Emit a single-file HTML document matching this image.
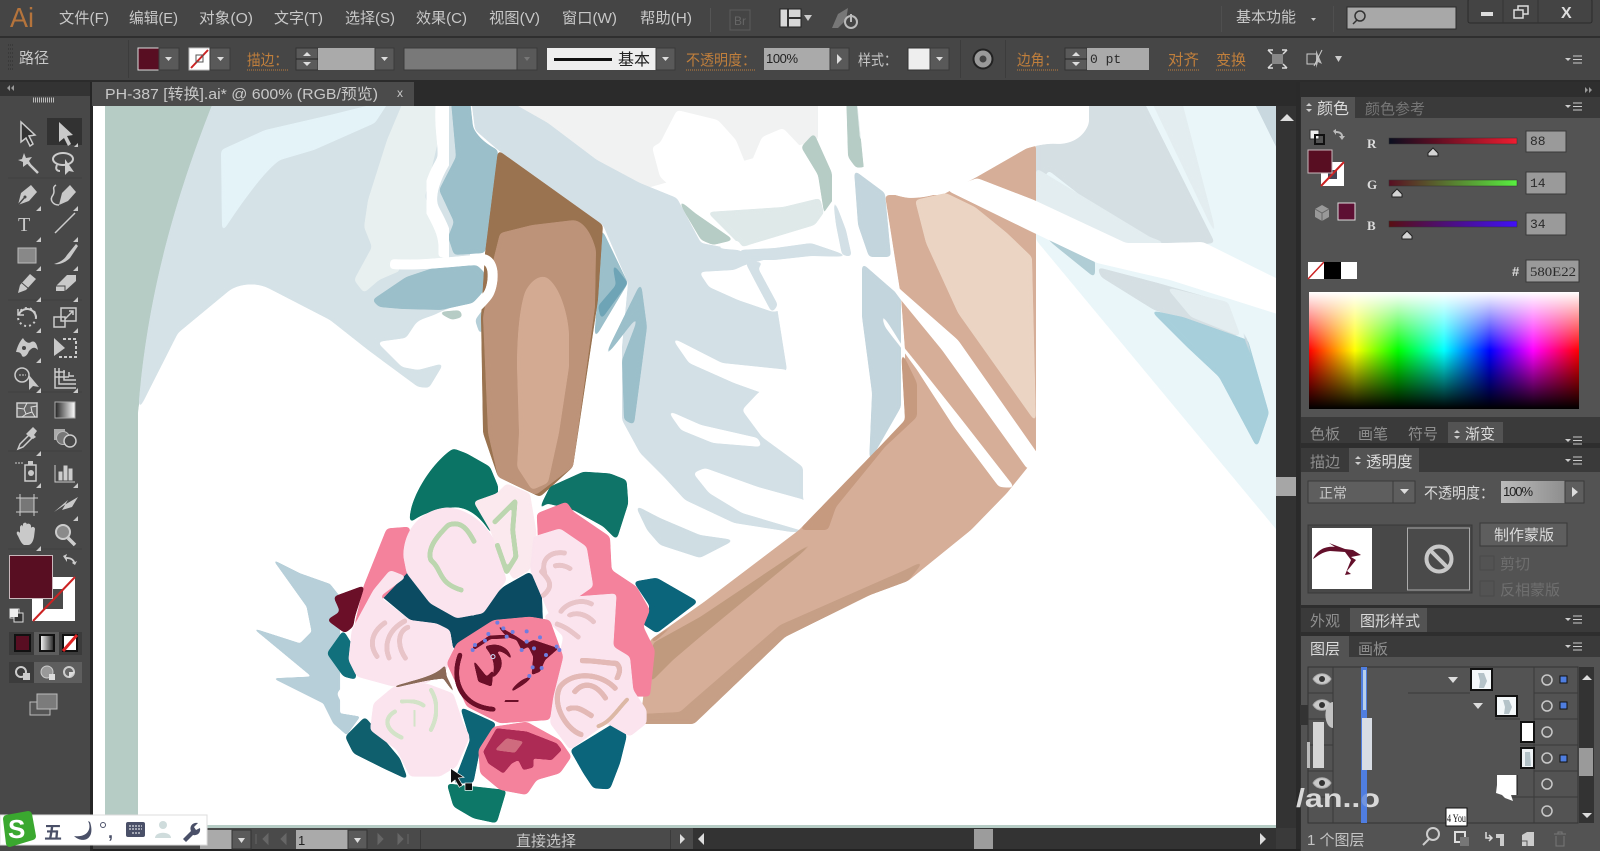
<!DOCTYPE html>
<html><head><meta charset="utf-8"><style>
html,body{margin:0;padding:0;width:1600px;height:851px;overflow:hidden;background:#3a3a3a}
svg{display:block;filter:blur(.35px)}
text{font-family:"Liberation Sans","Noto Sans CJK SC",sans-serif;fill:#c8c8c8;font-size:14px}
.o{fill:#c07f3c}.d{fill:#8f8f8f}.k{fill:#222}.h{fill:#dcdcdc}.m{font-family:"Liberation Mono","Noto Sans CJK SC",monospace;fill:#2a2a2a;font-size:13px}
.art path{filter:url(#goo)}
.bq path{filter:url(#goob)}
.bq g path{filter:url(#goos)}
</style></head><body>
<svg width="1600" height="851" viewBox="0 0 1600 851" xmlns="http://www.w3.org/2000/svg">
<defs>
<clipPath id="cv"><rect x="93" y="106" width="1183" height="722"/></clipPath>
<clipPath id="cv2"><rect x="105" y="106" width="1171" height="722"/></clipPath>
<filter id="goo" color-interpolation-filters="sRGB" x="-20%" y="-20%" width="140%" height="140%"><feGaussianBlur stdDeviation="2"/><feColorMatrix values="1 0 0 0 0 0 1 0 0 0 0 0 1 0 0 0 0 0 14 -6.500"/></filter>
<filter id="goob" color-interpolation-filters="sRGB" x="-20%" y="-20%" width="140%" height="140%"><feGaussianBlur stdDeviation="6"/><feColorMatrix values="1 0 0 0 0 0 1 0 0 0 0 0 1 0 0 0 0 0 14 -6.500"/></filter>
<filter id="goos" color-interpolation-filters="sRGB" x="-20%" y="-20%" width="140%" height="140%"><feGaussianBlur stdDeviation="3"/><feColorMatrix values="1 0 0 0 0 0 1 0 0 0 0 0 1 0 0 0 0 0 10 -4"/></filter>
<linearGradient id="hue"><stop offset="0" stop-color="#f00"/><stop offset=".17" stop-color="#ff0"/><stop offset=".33" stop-color="#0f0"/><stop offset=".5" stop-color="#0ff"/><stop offset=".67" stop-color="#00f"/><stop offset=".83" stop-color="#f0f"/><stop offset="1" stop-color="#f00"/></linearGradient>
<linearGradient id="wt" x2="0" y2="1"><stop offset="0" stop-color="#fff"/><stop offset=".5" stop-color="#fff" stop-opacity="0"/><stop offset=".5" stop-color="#000" stop-opacity="0"/><stop offset="1" stop-color="#000"/></linearGradient>
<linearGradient id="sr"><stop offset="0" stop-color="#0a0f20"/><stop offset=".35" stop-color="#5a0e22"/><stop offset="1" stop-color="#f01c30"/></linearGradient>
<linearGradient id="sg"><stop offset="0" stop-color="#580e22"/><stop offset="1" stop-color="#58f040"/></linearGradient>
<linearGradient id="sb"><stop offset="0" stop-color="#580e12"/><stop offset="1" stop-color="#4010f8"/></linearGradient>
<linearGradient id="gr"><stop offset="0" stop-color="#fff"/><stop offset="1" stop-color="#222"/></linearGradient>
<linearGradient id="f1"><stop offset="0" stop-color="#bbb"/><stop offset="1" stop-color="#8e8e8e"/></linearGradient>
</defs>
<rect width="1600" height="851" fill="#3a3a3a"/>
<!-- menu bar -->
<rect width="1600" height="36" fill="#454545"/><rect y="36" width="1600" height="2" fill="#2f2f2f"/>
<rect y="38" width="1600" height="42" fill="#464646"/><rect y="80" width="1600" height="26" fill="#2b2b2b"/>
<text x="10" y="27" style="font-size:28px;fill:#b5743c" textLength="24" lengthAdjust="spacingAndGlyphs">Ai</text>
<g style="font-size:15px">
<text x="59" y="23" style="font-size:15px" textLength="50" lengthAdjust="spacingAndGlyphs">文件(F)</text>
<text x="129" y="23" style="font-size:15px" textLength="49" lengthAdjust="spacingAndGlyphs">编辑(E)</text>
<text x="199" y="23" style="font-size:15px" textLength="54" lengthAdjust="spacingAndGlyphs">对象(O)</text>
<text x="274" y="23" style="font-size:15px" textLength="49" lengthAdjust="spacingAndGlyphs">文字(T)</text>
<text x="345" y="23" style="font-size:15px" textLength="50" lengthAdjust="spacingAndGlyphs">选择(S)</text>
<text x="416" y="23" style="font-size:15px" textLength="51" lengthAdjust="spacingAndGlyphs">效果(C)</text>
<text x="489" y="23" style="font-size:15px" textLength="51" lengthAdjust="spacingAndGlyphs">视图(V)</text>
<text x="562" y="23" style="font-size:15px" textLength="55" lengthAdjust="spacingAndGlyphs">窗口(W)</text>
<text x="640" y="23" style="font-size:15px" textLength="52" lengthAdjust="spacingAndGlyphs">帮助(H)</text>
</g>
<rect x="710" y="8" width="1" height="24" fill="#555"/>
<rect x="730" y="10" width="20" height="20" fill="none" stroke="#5c5c5c"/><text x="734" y="25" style="font-size:12px;fill:#666">Br</text>
<rect x="780" y="9" width="21" height="18" fill="#d8d8d8" stroke="#222"/><path d="M788,9v18M788,18h13" stroke="#333" stroke-width="2"/><path d="M804,15h8l-4,6z" fill="#ccc"/>
<path d="M832,28l6-14 10-6-2 12-8 8z" fill="#777"/><circle cx="851" cy="22" r="6" fill="none" stroke="#bbb" stroke-width="2"/><path d="M851,14v8" stroke="#bbb" stroke-width="2"/>
<rect x="1221" y="6" width="1" height="26" fill="#4f4f4f"/><rect x="1333" y="6" width="1" height="26" fill="#4f4f4f"/>
<text x="1236" y="22" style="font-size:15px" textLength="60" lengthAdjust="spacingAndGlyphs">基本功能</text><path d="M1311,18h5l-2.500,3z" fill="#ccc"/>
<rect x="1347" y="7" width="109" height="22" fill="#a8a8a8" stroke="#2a2a2a"/><circle cx="1360" cy="16" r="5" fill="none" stroke="#333" stroke-width="1.500"/><path d="M1357,20l-4,4" stroke="#333" stroke-width="1.500"/>
<rect x="1468" y="-1" width="124" height="24" rx="2" fill="#444" stroke="#2a2a2a"/><path d="M1503,0v23M1538,0v23" stroke="#333"/>
<rect x="1481" y="12" width="12" height="4" fill="#ddd"/><rect x="1518" y="6" width="10" height="8" fill="none" stroke="#ddd" stroke-width="1.500"/><rect x="1514" y="10" width="9" height="8" fill="#444" stroke="#ddd" stroke-width="1.500"/>
<text x="1561" y="18" style="font-size:16px;fill:#ddd;font-weight:bold">X</text>
<!-- control bar -->
<path d="M8,45h6M8,49h6M8,53h6M8,57h6M8,61h6M8,65h6M8,69h6" stroke="#2f2f2f" stroke-dasharray="1 1"/>
<text x="19" y="63" style="font-size:15px">路径</text>
<rect x="128" y="40" width="1" height="38" fill="#3c3c3c"/>
<rect x="138" y="48" width="21" height="22" fill="#580e22" stroke="#ddd"/><rect x="159" y="48" width="20" height="22" fill="#595959" stroke="#3a3a3a"/><path d="M165,57h7l-3.500,4z" fill="#ddd"/>
<rect x="189" y="48" width="21" height="22" fill="#fff" stroke="#bbb"/><path d="M191,68l17-18" stroke="#c22" stroke-width="2"/><rect x="196" y="55" width="7" height="7" fill="none" stroke="#555"/><rect x="210" y="48" width="20" height="22" fill="#595959" stroke="#3a3a3a"/><path d="M217,57h7l-3.500,4z" fill="#ddd"/>
<text x="247" y="65" class="o" textLength="41" lengthAdjust="spacingAndGlyphs" style="font-size:15px">描边：</text><path d="M247,70h41" stroke="#c07f3c" stroke-dasharray="1 1"/>
<rect x="296" y="48" width="22" height="22" fill="#5a5a5a" stroke="#333"/><path d="M296,59h22" stroke="#222"/><path d="M303,56l4-4 4,4zM303,62l4 4 4-4z" fill="#ddd"/>
<rect x="318" y="48" width="57" height="22" fill="#aaa"/><rect x="375" y="48" width="19" height="22" fill="#595959" stroke="#3a3a3a"/><path d="M381,57h7l-3.500,4z" fill="#ddd"/>
<rect x="404" y="48" width="113" height="22" fill="#797979" stroke="#3a3a3a"/><rect x="517" y="48" width="20" height="22" fill="#595959" stroke="#3a3a3a"/><path d="M524,57h6l-3,4z" fill="#777"/>
<rect x="547" y="48" width="109" height="22" fill="#eee"/><rect x="554" y="58" width="58" height="3" fill="#111"/><text x="618" y="65" class="k" style="font-size:16px">基本</text>
<rect x="656" y="48" width="19" height="22" fill="#595959" stroke="#3a3a3a"/><path d="M662,57h7l-3.500,4z" fill="#ddd"/>
<text x="686" y="65" class="o" textLength="70" lengthAdjust="spacingAndGlyphs" style="font-size:15px">不透明度：</text><path d="M686,70h70" stroke="#c07f3c" stroke-dasharray="1 1"/>
<rect x="764" y="48" width="66" height="22" fill="#aaa"/><text x="766" y="63" class="k" style="font-size:13px" textLength="32">100%</text><rect x="830" y="48" width="19" height="22" fill="#595959" stroke="#3a3a3a"/><path d="M837,54l5,5-5,5z" fill="#ddd"/>
<text x="858" y="65" textLength="39" lengthAdjust="spacingAndGlyphs" style="font-size:15px">样式：</text>
<rect x="908" y="48" width="22" height="22" fill="#eee" stroke="#333"/><rect x="930" y="48" width="19" height="22" fill="#595959" stroke="#3a3a3a"/><path d="M936,57h7l-3.500,4z" fill="#ddd"/>
<rect x="960" y="40" width="1" height="38" fill="#3c3c3c"/><rect x="1005" y="40" width="1" height="38" fill="#3c3c3c"/>
<circle cx="983" cy="59" r="9.500" fill="#9a9a9a" stroke="#222" stroke-width="2"/><circle cx="983" cy="59" r="3.500" fill="#444"/>
<text x="1017" y="65" class="o" textLength="41" lengthAdjust="spacingAndGlyphs" style="font-size:15px">边角：</text><path d="M1017,70h41" stroke="#c07f3c" stroke-dasharray="1 1"/>
<rect x="1065" y="48" width="22" height="22" fill="#5a5a5a" stroke="#333"/><path d="M1065,59h22" stroke="#222"/><path d="M1072,56l4-4 4,4zM1072,62l4 4 4-4z" fill="#ddd"/>
<rect x="1087" y="48" width="62" height="22" fill="#aaa"/><text x="1090" y="63" class="m" style="font-size:13px">0 pt</text>
<text x="1168" y="65" class="o" style="font-size:15.500px">对齐</text><path d="M1168,70h31" stroke="#c07f3c" stroke-dasharray="1 1"/>
<text x="1216" y="65" class="o" style="font-size:15px">变换</text><path d="M1216,70h30" stroke="#c07f3c" stroke-dasharray="1 1"/>
<rect x="1272" y="54" width="11" height="10" fill="#888"/><path d="M1268,50l4,4M1287,50l-4,4M1268,68l4-4M1287,68l-4-4M1268,50h5M1287,50h-5M1268,68h5M1287,68h-5" stroke="#ddd" stroke-width="1.500"/>
<rect x="1307" y="54" width="10" height="10" fill="none" stroke="#ccc"/><path d="M1316,50l6,14-4-2-2,6z" fill="#bbb"/><path d="M1322,50l-8,16" stroke="#ccc"/><path d="M1335,56h7l-3.500,6z" fill="#ccc"/>
<path d="M1565,58h6l-3,3z" fill="#ccc"/><path d="M1573,56h9M1573,59.500h9M1573,63h9" stroke="#ccc"/>

<!-- canvas art -->
<rect x="93" y="106" width="1183" height="722" fill="#fff"/>
<g clip-path="url(#cv2)"><g class="art">
<path d="M95,90H222C175,200 150,320 138,412V840H95Z" fill="#b6ccc5"/>
<!-- left sleeve -->
<path d="M218,90H470V300L440,312C430,318 418,318 414,326L406,338 377,342 402,367 418,370 444,363 429,388 418,387 368,350 330,320 268,288C255,282 240,284 230,290L178,333 138,412C145,320 165,220 218,90Z" fill="#d5e2e7"/>
<path d="M221,150L265,130 330,115 390,100 375,123 314,150 280,160C265,170 240,205 222,233Z" fill="#e4f3f8"/>
<path d="M408,90H440V133L425,197 444,243 441,260 391,263 402,270 379,280 364,293 354,280 372,247 364,227 368,200 387,140Z" fill="#e8f0f0"/>
<path d="M450,90H469L473,127C478,138 488,145 498,150L496,187 485,253 454,255 448,237 454,222 439,190 456,157Z" fill="#9bbfca"/>
<path d="M372,300L406,277 433,268 477,265 485,273 483,292 473,303 441,310 402,309 379,307Z" fill="#9bbfca"/>
<path d="M437,312L452,320 463,317 460,310Z" fill="#b6ccc5"/>
<path d="M475,320L490,300 490,320 480,335Z" fill="#b5cfd8"/>
<!-- top gray -->
<path d="M469,90H818V140L640,190 597,160 548,123Z" fill="#f1f2f2"/>
<!-- center garment -->
<path d="M470,90L475,130 498,150 603,225 628,283 622,347 622,420 640,453 664,477 685,500 734,523 791,532 811,532 803,498 803,467 762,437 742,410 758,393 787,370 777,307 771,263 738,250 701,243 677,198 640,183 597,160 548,123 490,90Z" fill="#d3e0e6"/>
<path d="M699,272L734,270 745,265 771,258 782,310 773,312 738,300 709,287Z" fill="#fff"/>
<path d="M745,262L764,262 758,268 778,305 772,313 757,285Z" fill="#d3e0e6"/>
<path d="M671,337L722,363 790,370 762,393 734,383 689,363Z" fill="#fff"/>
<path d="M667,410L701,425 758,438 762,447 713,443 681,430Z" fill="#fff"/>
<path d="M693,473L705,468 758,487 805,500 813,534 742,513 709,493Z" fill="#fff"/>
<path d="M635,505L660,518 700,535 735,540 700,558 660,545 647,530Z" fill="#cfdde3"/>
<path d="M601,227L628,283 594,340 597,303Z" fill="#9bbfca"/>
<path d="M612,262L628,283 601,320 598,306 616,285Z" fill="#6ea4b6"/>
<path d="M641,282L647,327 634,425 624,420 622,360 640,313 601,363Z" fill="#9bbfca"/>
<!-- white flap -->
<path d="M652,147L660,143 677,110 718,120 736,140 748,170 762,137 783,128 801,147 832,212 754,207 697,210 660,177Z" fill="#fff"/>
<path d="M707,212L783,207 820,198 824,213 815,225 783,237 742,247 722,227Z" fill="#dfe9e9"/>
<path d="M801,147L814,133 832,173 832,212 824,213 818,175Z" fill="#b6ccc5"/>
<path d="M846,90H856L862,143 866,167 856,168 848,157Z" fill="#b6ccc5"/>
<path d="M677,198L695,213 734,240 713,245 701,240 685,213Z" fill="#b6ccc5"/>
<path d="M713,248L738,240 742,247 815,225 840,190 855,240 845,255 811,243 775,248 738,250Z" fill="#fff"/>
<path d="M738,250L775,248 811,243 852,257 811,256 775,260 746,260Z" fill="#d3e0e6"/>
<path d="M832,193L846,230 852,257 842,255 836,225Z" fill="#d3e0e6"/>
<path d="M856,95H880L905,125 868,128 905,150 860,140Z" fill="#e4eded"/>
<!-- arm left -->
<path d="M498,150L603,225 598,300 573,467 540,497 498,477 483,433 481,317 485,253Z" fill="#9a7350"/>
<path d="M500,233L532,225 574,220C585,222 592,235 596,250L595,307 573,467 536,495 498,477 488,433 483,317 494,257Z" fill="#bd9379"/>
<path d="M546,277C538,275 530,282 525,292 519,310 517,340 517,367L519,433 517,467 532,490 548,483 559,433 569,367 569,333C568,315 560,285 546,277Z" fill="#d3aa92"/>
<path d="M443,98C440,130 447,150 444,160 432,180 428,195 431,207 440,225 448,235 445,258" fill="none" stroke="#fff" stroke-width="14"/>
<path d="M390,264C420,266 450,262 484,259 496,262 494,285 488,295 480,305 472,312 465,316" fill="none" stroke="#fff" stroke-width="10"/>
<!-- second column -->
<path d="M854,170L885,193 891,257 869,257 858,225Z" fill="#c3d5dd"/>
<path d="M862,263L901,297 901,407 869,463 872,393 862,317Z" fill="#c3d5dd"/>
<!-- right background -->
<path d="M1036,90H1290V546L1036,240Z" fill="#eaf6f9"/>
<path d="M1036,143L1089,90H1138L1215,243 1150,250 1048,170 1036,200Z" fill="#d5dfe3"/>
<path d="M1036,168L1150,237 1166,243 1140,250 1097,263 1034,232Z" fill="#e3edf0"/>
<path d="M1146,90H1179L1219,243Z" fill="#e3edf0"/>
<path d="M1248,90H1290V175Z" fill="#c9d8df"/>
<path d="M1038,232L1095,260 1095,278Z" fill="#b0cdd5"/>
<path d="M1097,267L1158,283 1228,303 1240,337 1154,310 1101,277Z" fill="#d5dfe3"/>
<path d="M1166,287L1228,302 1241,337 1191,317Z" fill="#e3edf0"/>
<path d="M1150,310L1183,317 1248,340 1269,413 1257,448 1219,377 1187,347Z" fill="#a7cfdb"/>
<path d="M1232,303L1269,413 1248,340Z" fill="#c9d8df"/>
<!-- right arm -->
<path d="M885,195H942L975,178 1036,143V457L1007,493 971,530 908,581 870,595 785,637 740,680 694,724H640L650,640 704,602 799,530 860,467 905,423 905,350 901,297Z" fill="#d6ae98"/>
<path d="M915,200L946,193 975,207 1007,233 1032,257 1036,423 958,313 926,243Z" fill="#ebd4c3"/>
<path d="M901,350L917,383 917,417 885,447 836,507 828,530 799,530 704,602 653,643 650,640 704,602 799,530 860,467 905,420Z" fill="#c69a7f"/>
<path d="M653,643L700,617 830,530 700,637 673,660 650,683Z" fill="#c09a7e"/>
<path d="M640,714L680,712 690,703 780,625 905,570 925,560 908,581 870,595 785,637 740,680 694,724H640Z" fill="#c69f86"/>
<path d="M869,257L901,290 958,340 1040,457 1028,470 942,350 901,300Z" fill="#fff"/>
<path d="M862,265L873,300 901,343 962,420 1015,488 999,487 954,427 917,370 885,327Z" fill="#fff"/>
<path d="M856,90H1089V123C1085,135 1075,143 1060,144 1040,142 1010,150 975,177 950,192 930,198 909,198 890,196 870,185 864,170Z" fill="#fff"/>
<path d="M977,178L1034,200 1126,243 1166,243 1203,242 1290,285V318L1170,280 1097,263 1032,232 946,190Z" fill="#fff"/>
</g>
<rect x="93" y="825" width="1183" height="3" fill="#b6ccc5"/>
</g>

<!-- bouquet -->
<g transform="translate(240,430) scale(.33333)">
<g class="bq">
<g><path d="M100,390L180,430 270,462 300,500 300,850 360,860 320,915 280,880 250,820 100,745 215,740 40,595 180,640 215,605 200,530Z" fill="#b7cfd9"/></g>
<path d="M510,280C500,220 570,100 640,55L680,70 750,110 775,170 770,230 755,315C730,270 690,230 640,232 570,240 530,260 510,280Z" fill="#0b7465"/>
<path d="M890,250L930,170 1030,125 1110,130 1160,150 1165,220 1130,330 1090,290 1000,240 920,220Z" fill="#0f7468"/>
<path d="M1180,455L1250,443 1375,515 1250,610 1205,580 1230,530Z" fill="#0b657b"/>
<path d="M990,960L1120,880 1145,865 1160,920 1140,1000 1110,1078 1060,1075 1030,1030Z" fill="#0b657b"/>
<path d="M375,860L480,985 505,1050 430,1015 340,970 315,920Z" fill="#0f5f6d"/>
<path d="M310,600L335,640 350,750 310,740 260,670Z" fill="#11707c"/>
<path d="M620,1060L800,1080 770,1180 700,1165 640,1130Z" fill="#0d7868"/>
<path d="M420,495L495,420 560,500 700,560 790,470 870,425 905,480 910,600 640,660 630,600 510,570Z" fill="#0b4b62"/>
<path d="M660,830L770,880 720,960 700,1060 640,1060 690,930Z" fill="#0d6576"/>
<path d="M440,295L510,290 510,420 340,600 370,470Z" fill="#f4829c"/>
<path d="M890,250L980,215 1000,245 1110,320 1115,420 1190,470 1230,540 1210,590 1245,660 1230,800 1100,800 900,450Z" fill="#f4829c"/>
<path d="M280,500L375,465 345,560 340,590 315,610 260,570 300,545Z" fill="#6b0f28"/>
<path d="M490,380C490,300 540,240 620,232 700,235 770,310 780,380L800,450 730,550 650,565 570,520 500,430Z" fill="#fbe4ee"/>
<path d="M700,215L770,190 800,160 870,190 890,310 870,420 820,450 780,380 750,300Z" fill="#fbe9ee"/>
<path d="M400,480L450,420 500,440 420,500 510,570 590,580 630,600 640,660 620,720 560,760 460,770 350,740 325,690 335,600Z" fill="#fbe4ee"/>
<path d="M880,320L960,295 1040,350 1060,470 930,560 870,420Z" fill="#fbe4ee"/>
<path d="M910,560L1000,500 1130,490 1120,650 1170,680 1180,780 1220,840 1220,880 1170,920 1100,880 990,960 930,880 940,750 970,620Z" fill="#fbe4ee"/>
<path d="M400,820L460,770 560,760 640,790 670,880 690,920 650,1010 600,1040 510,1040 470,960 390,900Z" fill="#fbe4ee"/>
<path d="M290,790L320,755 400,770 410,800 370,850 310,830Z" fill="#fff"/>
<g fill="none" stroke="#bcd6af" stroke-width="14" stroke-linejoin="round">
<path d="M705,340C685,300 665,270 625,285 600,310 560,350 572,390 610,420 590,460 670,482"/>
<path d="M760,280L825,215 818,300 828,380 800,425 770,340"/>
</g>
<g fill="none" stroke="#d3e3c8" stroke-width="12"><path d="M470,842C430,860 430,900 490,925"/><path d="M480,815C510,810 540,815 555,830"/><path d="M570,775C600,820 590,870 570,905"/><path d="M522,840L525,890"/></g>
<g fill="none" stroke="#e8c4c8" stroke-width="14" stroke-linejoin="round">
<path d="M415,685C380,640 400,600 440,575M450,690C430,650 440,600 500,570M500,690C470,650 470,600 510,590"/>
<path d="M980,370C930,360 900,390 915,430M940,410C960,400 985,410 995,420M900,420C930,450 945,470 905,500"/>
<path d="M1060,525C1020,500 970,525 960,550M1065,580C1030,540 990,550 985,560M945,580C980,590 1000,610 1020,625"/>
</g>
<g fill="none" stroke="#e3b9b6" stroke-width="15" stroke-linejoin="round">
<path d="M1130,780C1090,730 1000,720 960,770 930,830 990,910 1030,915"/>
<path d="M1000,790C1030,750 1070,760 1100,810"/>
<path d="M1020,692C1060,690 1100,700 1130,700 1150,720 1130,740 1130,750"/>
<path d="M980,840C1010,820 1040,850 1060,860"/>
<path d="M1070,890C1110,880 1130,840 1165,805" stroke="#dcb8a5" stroke-width="11"/>
</g>
<g><path d="M460,770C520,750 590,740 615,705L620,740 650,800 610,745C560,750 520,760 470,772Z" fill="#8a6a58"/></g>
<path d="M620,700L650,640 760,570 870,560 930,570 970,680 940,800 930,870 780,880 680,830Z" fill="#f4829c"/>
<path d="M715,960L760,890 860,875 960,930 995,980 960,1030 890,1050 860,1095 780,1080 720,1030Z" fill="#f4829c"/>
<g>
<path d="M730,965L770,895 860,905 950,940 965,960 935,990 880,985 880,1012 850,1020 835,990 815,1000 790,1030 745,1000Z" fill="#ad2b55"/>
<path d="M765,960L800,925 850,935 825,968Z" fill="#cf6b7e"/>
<path d="M660,675C630,760 670,830 760,838" fill="none" stroke="#6b0f28" stroke-width="14" stroke-linecap="round"/>
<path d="M800,815L830,812" fill="none" stroke="#6b0f28" stroke-width="13" stroke-linecap="round"/>
<path d="M700,690L740,740 760,720 755,770 715,755Z" fill="#6b0f28"/>
<path d="M735,650C770,635 810,650 815,690 800,670 780,660 770,665 800,700 780,730 755,745 770,710 760,680 735,650Z" fill="#6b0f28"/>
<path d="M815,780C835,755 850,745 875,740 860,760 840,770 815,785Z" fill="#6b0f28"/>
<path d="M770,585L830,620 860,640 880,630 955,655 915,690 900,725 875,735 880,680 865,650 845,660 830,630 800,620Z" fill="#6b0f28"/>
<path d="M700,655L750,622 800,620" fill="none" stroke="#6b0f28" stroke-width="10"/>
</g>
</g>
<g fill="#6f7de0">
<circle cx="772" cy="578" r="6"/><circle cx="790" cy="595" r="6"/><circle cx="818" cy="606" r="6"/><circle cx="860" cy="604" r="6"/><circle cx="900" cy="622" r="6"/><circle cx="950" cy="650" r="6"/><circle cx="958" cy="660" r="6"/><circle cx="918" cy="675" r="6"/><circle cx="905" cy="714" r="6"/><circle cx="878" cy="712" r="6"/><circle cx="868" cy="738" r="6"/><circle cx="882" cy="655" r="6"/><circle cx="845" cy="660" r="6"/><circle cx="860" cy="635" r="6"/><circle cx="800" cy="620" r="6"/><circle cx="745" cy="612" r="6"/><circle cx="735" cy="632" r="6"/><circle cx="705" cy="645" r="6"/><circle cx="698" cy="660" r="6"/>
</g>
<circle cx="759" cy="680" r="6" fill="none" stroke="#cfe0ff" stroke-width="3"/>
<path d="M632,1015V1060L645,1050 658,1072 668,1066 655,1044 672,1042Z" fill="#111" stroke="#fff" stroke-width="2"/>
<rect x="675" y="1059" width="22" height="22" fill="#111" stroke="#fff" stroke-width="2"/>
</g>

<!-- left tool panel -->
<rect x="0" y="82" width="90" height="769" fill="#484848"/><rect x="90" y="82" width="3" height="769" fill="#262626"/>
<rect x="0" y="82" width="90" height="14" fill="#333"/><path d="M10,85l-3,3 3,3zM14,85l-3,3 3,3z" fill="#999"/>
<path d="M33,100h22" stroke="#bbb" stroke-width="5" stroke-dasharray="1 1"/>
<path d="M8,178H82M8,300H82M8,392H82M8,451H82M8,549H82" stroke="#3f3f3f"/>
<rect x="47" y="118" width="35" height="27" fill="#323232"/>
<g fill="#c9c9c9" stroke="none">
<path d="M21,122V142L26,138 30,146 33,144 29,136 35,135Z" fill="#333" stroke="#ccc" stroke-width="1.500"/>
<path d="M59,122V142L64,138 68,146 71,144 67,136 73,135Z"/>
<g transform="translate(27,162)"><path d="M-5,-3l2-6 2,5 6-1-3 4 3 5-5-2-4 3 0-5-5-2z"/><path d="M2,2L11,11" stroke="#ccc" stroke-width="2.500"/></g>
<g transform="translate(65,162)" fill="none" stroke="#ccc" stroke-width="2"><ellipse cx="-2" cy="-3" rx="10" ry="6"/><path d="M-8,3c-2,4 0,6 3,6"/><path d="M0,-3V13L4,9 9,10Z" fill="#ccc" stroke="none"/></g>
<g transform="translate(27,195)"><path d="M-9,10L-6,-2 4,-10 10,-3 2,6Z"/><path d="M-9,10L-2,2" stroke="#484848" stroke-width="1.500"/><circle cx="-2" cy="2" r="1.500" fill="#484848"/></g>
<g transform="translate(67,195)"><path d="M-8,10L-5,-2 3,-10 9,-3 1,6Z"/><path d="M-8,10C-14,10 -18,5 -14,0 -11,-5 -16,-7 -11,-10" fill="none" stroke="#ccc" stroke-width="1.500"/></g>
<text x="18" y="231" style="font-size:20px;font-family:'Liberation Serif',serif;fill:#c9c9c9">T</text>
<path d="M55,233L75,213" stroke="#ccc" stroke-width="1.500"/>
<rect x="18" y="248" width="18" height="15" fill="#888" stroke="#bbb"/>
<path d="M54,264C60,262 64,260 67,255L76,244 78,246 70,258C66,262 60,265 54,264Z"/>
<g transform="translate(27,283)"><path d="M-9,10L-7,2 3,-9 9,-4 -1,7Z"/><path d="M-5,0l7,6" stroke="#484848"/></g>
<g transform="translate(65,283)"><path d="M-9,3L2,-8H11L11,-2 0,8H-9Z"/><path d="M-9,3H0V8" stroke="#484848" fill="none"/></g>
<g transform="translate(27,317)" fill="none" stroke="#ccc" stroke-width="2"><path d="M-8,-3a9,9 0 0 1 17,3" /><circle cx="0" cy="0" r="9" stroke-dasharray="2 3"/><path d="M-9,-8v6h6" stroke-width="1.500"/></g>
<g transform="translate(65,317)" fill="none" stroke="#ccc" stroke-width="1.500"><rect x="-11" y="0" width="11" height="10"/><rect x="-4" y="-9" width="15" height="13"/><path d="M0,2L8,-6M4,-6h4v4"/></g>
<g transform="translate(27,348)"><path d="M-11,4C-9,-4 -6,-8 -4,-10 -2,-6 2,-4 4,-6 8,-8 10,-4 11,2 7,-2 5,0 2,3 0,8 -3,10 -5,8 -6,4 -9,4 -11,4Z"/><circle cx="-3" cy="0" r="2" fill="#484848"/></g>
<g transform="translate(65,348)"><path d="M-11,-10L0,0-11,8Z"/><path d="M-2,-9H11V9H-8" fill="none" stroke="#ccc" stroke-width="2" stroke-dasharray="3 2"/></g>
<g transform="translate(27,378)"><circle cx="-5" cy="-3" r="7" fill="none" stroke="#ccc" stroke-width="1.500"/><path d="M2,-3V12L6,8 12,9Z"/><path d="M-8,-3h7" stroke="#ccc" stroke-dasharray="2 1"/></g>
<g transform="translate(65,378)" fill="none" stroke="#ccc" stroke-width="1.500"><path d="M-10,-10V10H11M-6,-10V6H11M-1,-8V2H11M4,-6V-2H9"/><path d="M-10,-6H0M-10,-1H4"/></g>
<g transform="translate(27,410)"><rect x="-10" y="-7" width="20" height="14" fill="#666" stroke="#ccc" stroke-width="1.500"/><path d="M-10,-2L-3,-1 0,-7M-3,-1L-1,4-5,7M-1,4L5,2 8,7M5,2L4,-3 10,-4" fill="none" stroke="#ddd"/></g>
<rect x="55" y="402" width="20" height="16" fill="url(#gr)" stroke="#aaa" transform="translate(130,0) scale(-1,1)"/>
<g transform="translate(27,438)"><path d="M-9,11L-7,6 2,-3 5,0-4,9Z" fill="none" stroke="#ccc" stroke-width="1.500"/><path d="M0,-5L4,-9 6,-11 10,-7 7,-3 9,-1 6,1-1,-4Z"/></g>
<g transform="translate(65,438)"><rect x="-11" y="-9" width="11" height="11" fill="#aaa"/><circle cx="-2" cy="0" r="6.500" fill="#777" stroke="#bbb"/><circle cx="5" cy="3" r="6" fill="#484848" stroke="#ccc" stroke-width="1.500"/></g>
<g transform="translate(31,473)"><rect x="-6" y="-8" width="11" height="16" fill="none" stroke="#ccc" stroke-width="1.500"/><circle cx="0" cy="0" r="3"/><rect x="-3" y="-12" width="5" height="4"/><path d="M-16,-10h8" stroke="#ccc" stroke-dasharray="2 1"/></g>
<g transform="translate(65,473)" fill="none" stroke="#ccc"><path d="M-10,-8V9H10"/><rect x="-6" y="-1" width="3" height="8" fill="#ccc"/><rect x="-1" y="-7" width="3" height="14" fill="#ccc"/><rect x="4" y="-4" width="3" height="11" fill="#ccc"/></g>
<g transform="translate(27,505)"><rect x="-7" y="-7" width="14" height="14" fill="#777" stroke="#ccc"/><path d="M-11,-7H11M-11,7H11M-7,-11V11M7,-11V11" stroke="#ccc" stroke-dasharray="4 10 4 0"/></g>
<path d="M54,512L66,504 78,497 72,507 62,510 68,500Z"/>
<g transform="translate(27,535)"><path d="M-9,1C-12,-3 -9,-5 -7,-2V-8C-6,-11 -4,-10 -4,-8V-11C-3,-13 0,-13 0,-10V-11C1,-12 4,-11 4,-9V-7C5,-9 8,-8 8,-6L7,2C6,7 4,10 1,10H-3C-6,8 -7,5 -9,1Z"/></g>
<g transform="translate(65,535)"><circle cx="-2" cy="-3" r="7" fill="#8a8a8a" stroke="#ccc" stroke-width="2"/><path d="M3,3L10,10" stroke="#ccc" stroke-width="3.500"/></g>
<path d="M41,206l-5,5h5zM78,143l-4,4h4zM78,206l-5,5h5zM41,237l-5,5h5zM78,237l-5,5h5zM41,266l-5,5h5zM78,266l-5,5h5zM41,297l-5,5h5zM78,297l-5,5h5zM41,328l-5,5h5zM78,328l-5,5h5zM41,358l-5,5h5zM41,388l-5,5h5zM78,388l-5,5h5zM41,451l-5,5h5zM41,483l-5,5h5zM78,483l-5,5h5zM78,516l-5,5h5zM41,546l-5,5h5z"/>
</g>
<rect x="32" y="577" width="43" height="44" fill="#fff"/><rect x="43" y="589" width="20" height="20" fill="#4a4a4a"/><path d="M33,621L75,577" stroke="#c22" stroke-width="2"/>
<rect x="9.500" y="555.500" width="43" height="43" fill="#580e22" stroke="#c9b8bc"/>
<path d="M63,556l4,-2-1,3c5,0 8,2 9,5l2,-1-2,4-3,-2 1,-1c-1,-2-3,-3-6,-3l0,3z" fill="#ccc"/>
<rect x="10" y="609" width="9" height="9" fill="#333" stroke="#ddd"/><rect x="14" y="613" width="9" height="9" fill="#333" stroke="#ddd"/><rect x="10" y="609" width="8" height="8" fill="#eee"/>
<rect x="9" y="632" width="73" height="23" fill="#3b3b3b"/><rect x="34" y="632" width="25" height="23" fill="#5d5d5d"/>
<rect x="15" y="635" width="15" height="16" fill="#580e22" stroke="#111" stroke-width="2"/><rect x="40" y="635" width="14" height="16" fill="url(#gr)" stroke="#111" stroke-width="2"/><rect x="63" y="635" width="14" height="16" fill="#fff" stroke="#111" stroke-width="2"/><path d="M63,651L77,635" stroke="#d22" stroke-width="3"/>
<rect x="9" y="662" width="73" height="21" fill="#5e5e5e"/><rect x="9" y="662" width="25" height="21" fill="#3c3c3c"/>
<circle cx="21" cy="672" r="5" fill="none" stroke="#ccc" stroke-width="2"/><rect x="23" y="673" width="7" height="7" fill="#ccc"/>
<circle cx="47" cy="672" r="6" fill="#999" stroke="#ccc"/><rect x="49" y="674" width="6" height="6" fill="#ddd"/><circle cx="69" cy="672" r="5" fill="#666" stroke="#ccc" stroke-width="2"/><path d="M69,672l6,0-6,6z" fill="#ddd"/>
<rect x="30" y="702" width="20" height="13" fill="#555" stroke="#bbb"/><rect x="37" y="694" width="20" height="15" fill="#7b7b7b" stroke="#bbb"/>

<!-- tab -->
<rect x="92" y="82" width="322" height="24" fill="#4b4b4b"/>
<text x="105" y="99" textLength="273" lengthAdjust="spacingAndGlyphs" style="font-size:15px">PH-387 [转换].ai* @ 600% (RGB/预览)</text>
<text x="397" y="97" style="font-size:12px">x</text>

<!-- vertical scrollbar -->
<rect x="1276" y="106" width="24" height="722" fill="#333"/><rect x="1296" y="82" width="4" height="769" fill="#2a2a2a"/>
<path d="M1280,121l7-7 7,7z" fill="#ddd"/>
<rect x="1276" y="477" width="20" height="19" fill="#a6a6a6"/>

<!-- bottom status bar -->
<rect x="93" y="828" width="1183" height="23" fill="#4a4a4a"/><rect x="93" y="849" width="1207" height="2" fill="#222"/>
<rect x="200" y="830" width="32" height="19" fill="#aaa"/><rect x="232" y="830" width="19" height="19" fill="#5a5a5a" stroke="#333"/><path d="M238,838h7l-3.500,5z" fill="#ddd"/>
<path d="M256,834v10M268,834l-5,5 5,5zM286,834l-5,5 5,5z" fill="#666" stroke="#666"/>
<rect x="296" y="830" width="52" height="19" fill="#aaa"/><text x="298" y="845" class="k" style="font-size:13px">1</text><rect x="348" y="830" width="19" height="19" fill="#5a5a5a" stroke="#333"/><path d="M354,838h7l-3.500,5z" fill="#ddd"/>
<path d="M378,834l5,5-5,5zM398,834l5,5-5,5zM408,834v10" fill="#666" stroke="#666"/>
<rect x="420" y="830" width="1" height="19" fill="#3a3a3a"/>
<text x="516" y="846" style="font-size:15px">直接选择</text>
<rect x="670" y="830" width="1" height="19" fill="#3a3a3a"/><path d="M680,834l5,5-5,5z" fill="#ddd"/>
<rect x="693" y="828" width="583" height="21" fill="#333"/><path d="M704,833l-6,6 6,6z" fill="#ddd"/><path d="M1260,833l6,6-6,6z" fill="#ddd"/><rect x="974" y="829" width="19" height="20" fill="#9c9c9c"/>

<!-- IME bar -->
<rect x="0" y="815" width="207" height="30" fill="#fff" stroke="#ddd"/>
<path d="M3,819Q3,816 6,815L28,811Q31,811 32,814L36,836Q36,839 33,840L10,847Q7,847 6,844Z" fill="#3aa82f"/>
<text x="8" y="838" style="font-size:26px;font-weight:bold;fill:#fff">S</text>
<text x="44" y="839" style="font-size:18px;font-weight:bold;fill:#4a5068">五</text>
<path d="M88,821C92,828 88,838 74,836 82,844 96,840 90,822Z" fill="#4a5068"/>
<circle cx="103" cy="825" r="2.500" fill="none" stroke="#4a5068"/><text x="108" y="838" style="font-size:18px;font-weight:bold;fill:#4a5068">,</text>
<rect x="126" y="822" width="19" height="15" rx="2" fill="#4a5068"/><path d="M129,826h13M129,829h13M132,833h8" stroke="#fff" stroke-dasharray="2 1"/>
<circle cx="163" cy="825" r="4" fill="#cfdcdc"/><path d="M155,838c0-7 16-7 16,0z" fill="#cfdcdc"/>
<path d="M183,839l8-8c-2-5 2-9 7-8l-4,4 2,3 4-2c1,5-3,8-7,7l-7,7z" fill="#4a5068"/>

<!-- right panels -->
<rect x="1300" y="82" width="300" height="769" fill="#2e2e2e"/>
<path d="M1585,87l3,3-3,3zM1589,87l3,3-3,3z" fill="#999"/>
<!-- colour -->
<rect x="1301" y="97" width="299" height="21" fill="#3a3a3a"/><rect x="1301" y="97" width="54" height="21" fill="#535353"/>
<path d="M1306,106l3-3 3,3zM1306,109l3,3 3-3z" fill="#ccc"/>
<text x="1317" y="114" class="h" style="font-size:16px">颜色</text><text x="1365" y="114" class="d" style="font-size:15px;fill:#777">颜色参考</text>
<rect x="1301" y="118" width="299" height="299" fill="#535353"/>
<rect x="1310" y="130" width="9" height="9" fill="#eee" stroke="#333"/><rect x="1315" y="135" width="9" height="9" fill="none" stroke="#111" stroke-width="2"/>
<path d="M1333,131l3-2v2c4,0 7,2 7,5l2,0-3,4-3-4 2,0c0-2-2-3-5-3v2z" fill="#bbb"/>
<rect x="1321" y="162" width="23" height="24" fill="#fff"/><rect x="1328" y="170" width="9" height="9" fill="#445"/><path d="M1321,186L1344,162" stroke="#c22" stroke-width="2"/>
<rect x="1308" y="150" width="24" height="23" fill="#580e22" stroke="#c9b8bc"/>
<path d="M1322,205l7,4v8l-7,4-7-4v-8z" fill="#999"/><path d="M1315,209l7,4 7-4M1322,213v8" stroke="#666" fill="none"/>
<rect x="1338" y="203" width="17" height="17" fill="#5d0f33" stroke="#ddd"/>
<text x="1367" y="148" class="h" style="font-size:13px;font-family:'Liberation Serif',serif;font-weight:bold">R</text>
<text x="1367" y="189" class="h" style="font-size:13px;font-family:'Liberation Serif',serif;font-weight:bold">G</text>
<text x="1367" y="230" class="h" style="font-size:13px;font-family:'Liberation Serif',serif;font-weight:bold">B</text>
<rect x="1389" y="138" width="128" height="6" fill="url(#sr)" stroke="#333" stroke-width=".5"/>
<rect x="1389" y="180" width="128" height="6" fill="url(#sg)" stroke="#333" stroke-width=".5"/>
<rect x="1389" y="221" width="128" height="6" fill="url(#sb)" stroke="#333" stroke-width=".5"/>
<path d="M1428,153l5-5 5,5v3h-10zM1392,194l5-5 5,5v3h-10zM1402,236l5-5 5,5v3h-10z" fill="#d4d4d4" stroke="#222"/>
<g fill="#9a9a9a" stroke="#3a3a3a"><rect x="1526" y="131" width="40" height="21"/><rect x="1526" y="172" width="40" height="22"/><rect x="1526" y="213" width="40" height="22"/><rect x="1526" y="260" width="53" height="22"/></g>
<text x="1530" y="145" class="m" style="font-size:13px">88</text><text x="1530" y="187" class="m" style="font-size:13px">14</text><text x="1530" y="228" class="m" style="font-size:13px">34</text>
<text x="1530" y="276" class="m" style="font-size:13px;font-family:'Liberation Serif',serif" textLength="46" lengthAdjust="spacingAndGlyphs">580E22</text>
<text x="1512" y="276" class="h" style="font-size:13px;font-weight:bold">#</text>
<rect x="1308" y="262" width="16" height="17" fill="#fff"/><path d="M1308,279L1324,262" stroke="#c22" stroke-width="1.500"/><rect x="1324" y="262" width="17" height="17" fill="#000"/><rect x="1341" y="262" width="16" height="17" fill="#fff"/>
<rect x="1309" y="292" width="270" height="117" fill="url(#hue)"/><rect x="1309" y="292" width="270" height="117" fill="url(#wt)"/>
<!-- gradient tabs -->
<rect x="1301" y="417" width="299" height="26" fill="#3a3a3a"/>
<rect x="1448" y="422" width="55" height="21" fill="#535353"/>
<text x="1310" y="439" class="d" style="font-size:15px">色板</text><text x="1358" y="439" class="d" style="font-size:15px">画笔</text><text x="1408" y="439" class="d" style="font-size:15px">符号</text>
<path d="M1454,433l3-3 3,3zM1454,436l3,3 3-3z" fill="#ccc"/><text x="1465" y="439" class="h" style="font-size:15px">渐变</text>
<!-- transparency -->
<rect x="1301" y="448" width="299" height="24" fill="#3a3a3a"/><rect x="1349" y="448" width="70" height="24" fill="#535353"/>
<text x="1310" y="467" class="d" style="font-size:15px">描边</text>
<path d="M1355,459l3-3 3,3zM1355,462l3,3 3-3z" fill="#ccc"/><text x="1366" y="467" class="h" style="font-size:15.500px">透明度</text>
<rect x="1301" y="472" width="299" height="133" fill="#535353"/>
<rect x="1308" y="481" width="107" height="22" fill="#5e5e5e" stroke="#3a3a3a"/><path d="M1393,481v22" stroke="#3a3a3a"/><path d="M1400,489h9l-4.500,5z" fill="#ddd"/>
<text x="1319" y="498" style="font-size:14px">正常</text>
<text x="1424" y="498" class="h" textLength="70" lengthAdjust="spacingAndGlyphs" style="font-size:15px">不透明度：</text>
<rect x="1501" y="481" width="64" height="22" fill="url(#f1)"/><text x="1503" y="496" class="k" style="font-size:13px" textLength="30">100%</text><rect x="1565" y="481" width="19" height="22" fill="#5e5e5e" stroke="#3a3a3a"/><path d="M1572,487l6,5-6,5z" fill="#ddd"/>
<rect x="1308" y="525" width="164" height="68" fill="#484848" stroke="#383838"/><rect x="1312" y="528" width="60" height="61" fill="#fff"/>
<path d="M1313,559C1318,548 1328,546 1335,547L1329,543 1345,549 1353,550 1361,555 1351,557 1356,560 1347,571 1351,574 1345,575 1351,560 1345,552 1330,551C1322,552 1318,556 1313,559Z" fill="#63102b"/>
<rect x="1407.500" y="528" width="62" height="62" fill="#4a4a4a" stroke="#aaa"/>
<circle cx="1439" cy="559" r="12.500" fill="none" stroke="#c8c8c8" stroke-width="4"/><path d="M1430,550L1448,568" stroke="#c8c8c8" stroke-width="4"/>
<rect x="1480" y="523" width="87" height="23" fill="#5e5e5e" stroke="#383838"/><text x="1494" y="540" class="h" style="font-size:15px">制作蒙版</text>
<rect x="1480" y="556" width="14" height="14" fill="none" stroke="#4a4a4a"/><rect x="1480" y="581" width="14" height="15" fill="none" stroke="#4a4a4a"/>
<text x="1500" y="569" style="font-size:15px;fill:#6f6f6f">剪切</text><text x="1500" y="595" style="font-size:15px;fill:#6f6f6f">反相蒙版</text>
<!-- appearance -->
<rect x="1301" y="608" width="299" height="24" fill="#3a3a3a"/><rect x="1350" y="608" width="77" height="24" fill="#535353"/>
<text x="1310" y="626" class="d" style="font-size:15px">外观</text><text x="1360" y="626" class="h" style="font-size:15px">图形样式</text>
<!-- layers -->
<rect x="1301" y="636" width="299" height="21" fill="#3a3a3a"/><rect x="1301" y="636" width="48" height="21" fill="#535353"/>
<text x="1310" y="654" class="h" style="font-size:15px">图层</text><text x="1358" y="654" class="d" style="font-size:15px">画板</text>
<rect x="1301" y="657" width="299" height="194" fill="#535353"/>
<rect x="1308" y="667" width="270" height="156" fill="#535353" stroke="#333"/>
<rect x="1579" y="667" width="15" height="156" fill="#333"/><path d="M1582,680l5-5 5,5zM1582,813l5,5 5-5z" fill="#ddd"/><rect x="1579" y="748" width="14" height="28" fill="#9a9a9a"/>
<path d="M1333,667V823M1534,667V823M1308,745H1333M1308,693H1333M1308,719H1333M1308,771H1333M1308,797H1333M1534,693H1578M1534,719H1578M1534,745H1578M1534,771H1578M1534,797H1578M1408,693H1470M1495,719H1520M1520,745H1534M1510,797H1534" stroke="#3a3a3a"/>
<rect x="1361" y="667" width="6" height="156" fill="#4f7ee0"/>
<rect x="1362" y="718" width="10" height="52" fill="#d8dde4"/><rect x="1363" y="670" width="3" height="40" fill="#b8d0ec"/>
<path d="M1313,679c4-7 14-7 18,0c-4,7-14,7-18,0z" fill="#c9c9c9" stroke="#aaa"/><path d="M1313,705c4-7 14-7 18,0c-4,7-14,7-18,0z" fill="#c9c9c9" stroke="#aaa"/><path d="M1313,783c4-7 14-7 18,0c-4,7-14,7-18,0z" fill="#c9c9c9" stroke="#aaa"/>
<circle cx="1322" cy="679" r="3" fill="#333"/><circle cx="1322" cy="705" r="3" fill="#333"/><circle cx="1322" cy="783" r="3" fill="#333"/>
<rect x="1313" y="722" width="11" height="46" fill="#d5d5d5"/><rect x="1307" y="742" width="3" height="26" fill="#bbb"/><path d="M1333,702a7,12 0 0 0 0,26z" fill="#c2c2c2"/>
<rect x="1300" y="705" width="8" height="20" fill="#333"/>
<path d="M1448,677h10l-5,6z" fill="#ddd"/><path d="M1473,703h10l-5,6z" fill="#ddd"/>
<g stroke="#111" stroke-width="2"><rect x="1471" y="669" width="21" height="21" fill="#f4f8fa"/><rect x="1496" y="696" width="21" height="20" fill="#f4f8fa"/><rect x="1521" y="722" width="13" height="20" fill="#fff"/><rect x="1521" y="748" width="13" height="20" fill="#eef2f5"/></g>
<path d="M1478,673l6,0 3,8-3,7h-5l1-7zM1503,700h6l3,7-3,7h-5l1-7zM1525,752h5l1,14h-6z" fill="#8aa0a8" opacity=".6"/>
<path d="M1497,775h20v20h-6l2,6-8-3-3-3-6-2 1-8z" fill="#fff"/><path d="M1517,775v20" stroke="#111"/>
<rect x="1446" y="808" width="21" height="18" fill="#fff" stroke="#111"/><text x="1447" y="822" class="k" style="font-size:12px;font-family:'Liberation Serif',serif;fill:#111" textLength="19" lengthAdjust="spacingAndGlyphs">4 You</text>
<g fill="#555" stroke="#c8c8c8" stroke-width="1.500"><circle cx="1547" cy="680" r="5"/><circle cx="1547" cy="706" r="5"/><circle cx="1547" cy="732" r="5"/><circle cx="1547" cy="758" r="5"/><circle cx="1547" cy="784" r="5"/><circle cx="1547" cy="811" r="5"/></g>
<g fill="#4f7ee0" stroke="#111"><rect x="1560" y="676" width="7" height="7"/><rect x="1560" y="702" width="7" height="7"/><rect x="1560" y="755" width="7" height="7"/></g>
<text x="1296" y="807" style="font-size:26px;fill:#d8d8d8;font-weight:bold" textLength="84" lengthAdjust="spacingAndGlyphs">/an..o</text>
<rect x="1361" y="790" width="6" height="33" fill="#4f7ee0" opacity=".75"/>
<text x="1307" y="845" style="font-size:15px;fill:#c4c4c4">1 个图层</text>
<g fill="none" stroke="#ccc" stroke-width="2"><circle cx="1433" cy="834" r="6"/><path d="M1429,839l-6,6"/></g>
<rect x="1455" y="832" width="10" height="10" fill="none" stroke="#ddd" stroke-width="2"/><rect x="1460" y="837" width="9" height="9" fill="#777"/>
<path d="M1486,832v6h6M1489,835l3,3-3,3" fill="none" stroke="#ddd" stroke-width="1.500"/><path d="M1496,834h8v12h-4v-8h-4z" fill="#ccc"/>
<path d="M1522,835l5-3h7v14h-12z" fill="#ccc"/><path d="M1522,841h5v5" stroke="#535353" fill="none"/>
<path d="M1554,834h12M1558,834v-2h4v2M1556,836v10h8v-10" fill="none" stroke="#777"/>
<g fill="#ccc"><path d="M1565,105h6l-3,3z"/><path d="M1565,439h6l-3,3z"/><path d="M1565,459h6l-3,3z"/><path d="M1565,618h6l-3,3z"/><path d="M1565,645h6l-3,3z"/></g>
<path d="M1573,103h9M1573,106.500h9M1573,110h9M1573,437h9M1573,440.500h9M1573,444h9M1573,457h9M1573,460.500h9M1573,464h9M1573,616h9M1573,619.500h9M1573,623h9M1573,643h9M1573,646.500h9M1573,650h9" stroke="#ccc"/>
</svg>
</body></html>
